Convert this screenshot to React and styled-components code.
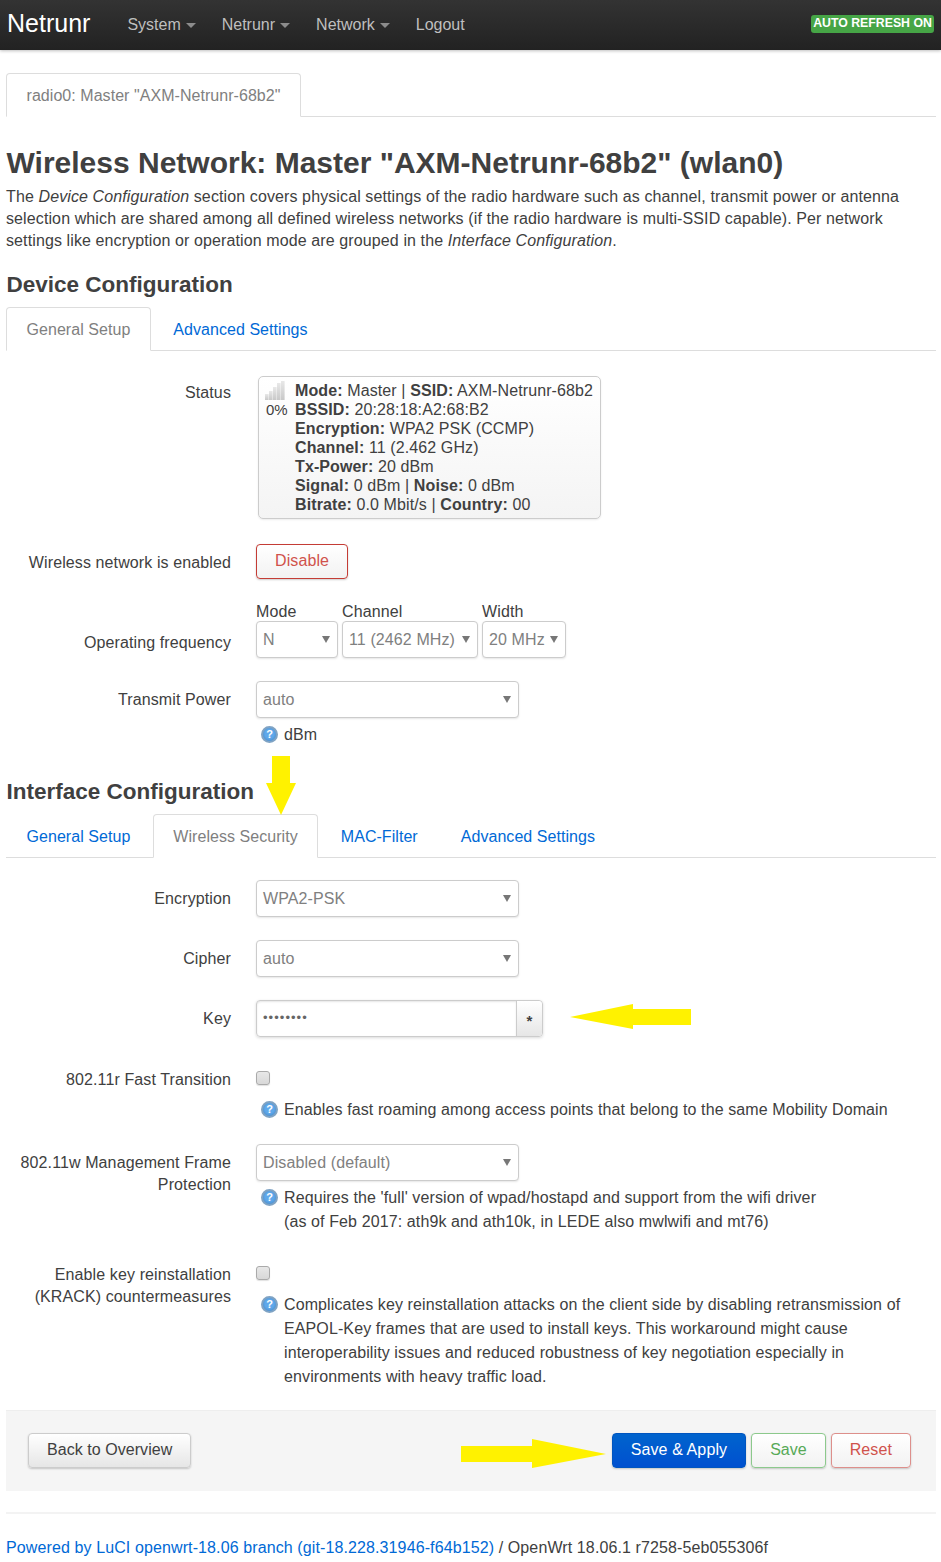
import styled, { createGlobalStyle, css } from 'styled-components'

const GlobalStyle = createGlobalStyle`
  html, body {
    margin: 0;
    padding: 0;
    background: #fff;
    color: #404040;
    font-family: "Liberation Sans", Arial, sans-serif;
    font-size: 16px;
    letter-spacing: 0.11px;
  }
  * { box-sizing: border-box; }
`

const Header = styled.header`
  height: 50px;
  display: flex;
  align-items: center;
  padding: 0 7px;
  background: linear-gradient(#333, #222);
  box-shadow: 0 1px 3px rgba(0,0,0,0.25);
`

const Brand = styled.a`
  font-size: 25px;
  letter-spacing: 0;
  color: #fff;
  margin-right: 37px;
  position: relative;
  top: -2px;
`

const NavItem = styled.a`
  display: flex;
  align-items: center;
  color: #bfbfbf;
  letter-spacing: 0;
  margin-right: 26px;
`

const NavCaret = styled.span`
  width: 0;
  height: 0;
  margin-left: 5px;
  margin-top: 1px;
  border-left: 5px solid transparent;
  border-right: 5px solid transparent;
  border-top: 5px solid #8c8c8c;
`

const RefreshBadge = styled.span`
  margin-left: auto;
  margin-top: -2px;
  height: 18px;
  width: 123px;
  background: #46a546;
  border-radius: 3px;
  color: #fff;
  font-size: 12.3px;
  font-weight: bold;
  letter-spacing: 0;
  line-height: 16px;
  text-align: center;
  white-space: nowrap;
`

const Main = styled.main`
  padding: 23px 5px 0 6px;
`

const TabBar = styled.ul`
  list-style: none;
  display: flex;
  margin: 0;
  padding: 0;
  height: 44px;
  border-bottom: 1px solid #ddd;
`

const Tab = styled.li`
  height: 44px;
  padding: 0 19.5px;
  margin-right: 2px;
  line-height: 43px;
  color: #0069d6;
  letter-spacing: 0.05px;
  border: 1px solid transparent;
  white-space: nowrap;
  ${p => p.$active && css`
    color: #808080;
    background: #fff;
    border-color: #ddd;
    border-bottom-color: #fff;
    border-radius: 4px 4px 0 0;
  `}
`

const PageTitle = styled.h2`
  font-size: 30px;
  line-height: 36px;
  font-weight: bold;
  letter-spacing: 0;
  margin: 28px 0 5px;
  padding-left: 0.5px;
  white-space: nowrap;
`

const Intro = styled.p`
  margin: 0;
  line-height: 22px;
  white-space: nowrap;
`

const SectionTitle = styled.h3`
  font-size: 22.5px;
  line-height: 34px;
  font-weight: bold;
  letter-spacing: 0;
  margin: ${p => p.$top}px 0 5px;
  padding: 1px 0 0 0.5px;
`

const Section = styled.section`
  position: relative;
`

const Rows = styled.div`
  padding-top: ${p => p.$top}px;
`

const Row = styled.div`
  position: relative;
  display: grid;
  grid-template-columns: 225px 1fr;
  column-gap: 25px;
  margin-bottom: ${p => p.$gap ?? 23}px;
`

const Label = styled.label`
  text-align: right;
  line-height: 22px;
  padding-top: ${p => p.$top ?? 8}px;
`

const StatusBox = styled.div`
  width: 343px;
  height: 143px;
  margin-left: 2px;
  padding: 4px 6px 0 6px;
  display: flex;
  border: 1px solid #ccc;
  border-radius: 5px;
  background: linear-gradient(#fff, #f4f4f4);
  box-shadow: 0 1px 2px rgba(0,0,0,0.08);
`

const SignalCol = styled.div`
  width: 30px;
  flex: none;
  line-height: 19px;
  font-size: 15px;
  letter-spacing: 0;
  padding-left: 1px;
  svg { display: block; margin-left: -1px; }
`

const StatusText = styled.div`
  line-height: 19px;
  white-space: nowrap;
`

const Btn = styled.button`
  height: 35px;
  padding: 0 18px 1px;
  font: 16px "Liberation Sans", Arial, sans-serif;
  letter-spacing: 0.05px;
  border-radius: 4px;
  border: 1px solid #ccc;
  color: #404040;
  background: linear-gradient(#fff, #e6e6e6);
  box-shadow: 0 1px 2px rgba(0,0,0,0.2);
  white-space: nowrap;
  ${p => p.$kind === 'red' && css`
    padding-bottom: 2px;
    letter-spacing: 0.11px;
    color: #d0524c;
    border-color: #c43c35;
    background: linear-gradient(#fff, #f2f2f2);
  `}
  ${p => p.$kind === 'green' && css`
    letter-spacing: 0;
    color: #57a957;
    border-color: #8cc98c;
    background: linear-gradient(#fff, #f2f2f2);
  `}
  ${p => p.$kind === 'pink' && css`
    letter-spacing: 0.11px;
    color: #d0524c;
    border-color: #dd8f8b;
    background: linear-gradient(#fff, #f2f2f2);
  `}
  ${p => p.$kind === 'blue' && css`
    letter-spacing: 0.11px;
    color: #fff;
    border-color: #0055c0;
    background: linear-gradient(#0064cd, #0050d0);
  `}
`

const Select = styled.div`
  width: ${p => p.$w ?? 263}px;
  height: 37px;
  display: flex;
  align-items: center;
  justify-content: space-between;
  padding: 0 6px;
  border: 1px solid #ccc;
  border-radius: 4px;
  color: #808080;
  background: #fff;
  box-shadow: 0 1px 2px rgba(0,0,0,0.1);
  white-space: nowrap;
`

const SelectCaret = styled.span`
  flex: none;
  width: 0;
  height: 0;
  margin-right: 1px;
  border-left: 4px solid transparent;
  border-right: 4px solid transparent;
  border-top: 7px solid #777;
`

const FreqGroup = styled.div`
  display: flex;
  gap: 4px;
`

const FreqCaption = styled.div`
  line-height: 19px;
`

const KeyGroup = styled.div`
  display: flex;
  width: 287px;
  height: 37px;
  border: 1px solid #ccc;
  border-radius: 4px;
  box-shadow: 0 1px 3px rgba(0,0,0,0.15);
`

const KeyInput = styled.div`
  flex: 1;
  padding-left: 6px;
  line-height: 33px;
  font-size: 13px;
  color: #666;
  letter-spacing: 1.05px;
  box-shadow: inset 0 1px 2px rgba(0,0,0,0.1);
  border-radius: 4px 0 0 4px;
`

const KeyToggle = styled.div`
  width: 26px;
  border-left: 1px solid #ccc;
  text-align: center;
  line-height: 40px;
  font-size: 15px;
  font-weight: bold;
  color: #404040;
  background: linear-gradient(#fff, #e6e6e6);
  border-radius: 0 4px 4px 0;
`

const Checkbox = styled.div`
  width: 14px;
  height: 14px;
  margin-top: ${p => p.$top}px;
  border: 1px solid #aaa;
  border-radius: 3px;
  background: linear-gradient(#e8e8e8, #d8d8d8);
  box-shadow: 0 1px 1px rgba(0,0,0,0.12);
`

const Help = styled.div`
  position: relative;
  margin-top: ${p => p.$top ?? 4}px;
  margin-bottom: -1px;
  padding: 1px 0 0 28px;
  line-height: 24px;
  white-space: nowrap;
`

const HelpIcon = styled.span`
  position: absolute;
  left: 5px;
  top: 4px;
  width: 17px;
  height: 17px;
  border-radius: 50%;
  background: radial-gradient(circle at 50% 45%, #5fa8ea 45%, #3d7fc0);
  border: 2px solid #7fa3c4;
  color: #fff;
  font-size: 11px;
  font-weight: bold;
  letter-spacing: 0;
  line-height: 13px;
  text-align: center;
`

const Arrow = styled.svg`
  position: absolute;
  left: ${p => p.$x}px;
  top: ${p => p.$y}px;
  fill: #fff200;
  pointer-events: none;
`

const ActionBar = styled.div`
  position: relative;
  height: 81px;
  margin-top: 22px;
  padding: 0 25px 2px 22px;
  display: flex;
  align-items: center;
  gap: 5px;
  background: #f5f5f5;
  border-top: 1px solid #eee;
`

const BackBtn = styled(Btn)`
  margin-right: auto;
`

const Rule = styled.hr`
  height: 2px;
  margin: 21px 0 0;
  border: 0;
  background: #f3f3f3;
`

const Footer = styled.footer`
  margin-top: 23px;
  line-height: 22px;
  white-space: nowrap;
`

const FooterLink = styled.a`
  color: #0069d6;
`

const SignalIcon = () => (
  <svg width="20" height="19" viewBox="0 0 20 19">
    <defs>
      <linearGradient id="bar" x1="0" y1="0" x2="0" y2="1">
        <stop offset="0" stopColor="#e8e8e8" />
        <stop offset="1" stopColor="#c8c8c8" />
      </linearGradient>
    </defs>
    <rect x="0" y="13" width="3.6" height="6" fill="url(#bar)" />
    <rect x="4" y="10" width="3.6" height="9" fill="url(#bar)" />
    <rect x="8" y="6" width="3.6" height="13" fill="url(#bar)" />
    <rect x="12" y="2" width="3.6" height="17" fill="url(#bar)" />
    <rect x="16" y="0" width="3.6" height="19" fill="url(#bar)" />
  </svg>
)

const SelectBox = ({ value, w }) => (
  <Select $w={w}>
    {value}
    <SelectCaret />
  </Select>
)

const HelpText = ({ top, children }) => (
  <Help $top={top}>
    <HelpIcon>?</HelpIcon>
    {children}
  </Help>
)

const App = () => (
  <>
    <GlobalStyle />
    <Header>
      <Brand>Netrunr</Brand>
      <NavItem>System<NavCaret /></NavItem>
      <NavItem>Netrunr<NavCaret /></NavItem>
      <NavItem>Network<NavCaret /></NavItem>
      <NavItem>Logout</NavItem>
      <RefreshBadge>AUTO REFRESH ON</RefreshBadge>
    </Header>
    <Main>
      <TabBar>
        <Tab $active>radio0: Master "AXM-Netrunr-68b2"</Tab>
      </TabBar>
      <PageTitle>Wireless Network: Master "AXM-Netrunr-68b2" (wlan0)</PageTitle>
      <Intro>
        The <em>Device Configuration</em> section covers physical settings of the radio hardware such as channel, transmit power or antenna<br />
        selection which are shared among all defined wireless networks (if the radio hardware is multi-SSID capable). Per network<br />
        settings like encryption or operation mode are grouped in the <em>Interface Configuration</em>.
      </Intro>

      <Section>
        <SectionTitle $top={15}>Device Configuration</SectionTitle>
        <TabBar>
          <Tab $active>General Setup</Tab>
          <Tab>Advanced Settings</Tab>
        </TabBar>
        <Rows $top={25}>
          <Row $gap={25}>
            <Label $top={6}>Status</Label>
            <StatusBox>
              <SignalCol>
                <SignalIcon />
                0%
              </SignalCol>
              <StatusText>
                <b>Mode:</b> Master | <b>SSID:</b> AXM-Netrunr-68b2<br />
                <b>BSSID:</b> 20:28:18:A2:68:B2<br />
                <b>Encryption:</b> WPA2 PSK (CCMP)<br />
                <b>Channel:</b> 11 (2.462 GHz)<br />
                <b>Tx-Power:</b> 20 dBm<br />
                <b>Signal:</b> 0 dBm | <b>Noise:</b> 0 dBm<br />
                <b>Bitrate:</b> 0.0 Mbit/s | <b>Country:</b> 00
              </StatusText>
            </StatusBox>
          </Row>
          <Row>
            <Label>Wireless network is enabled</Label>
            <div><Btn $kind="red">Disable</Btn></div>
          </Row>
          <Row>
            <Label $top={30}>Operating frequency</Label>
            <FreqGroup>
              <div>
                <FreqCaption>Mode</FreqCaption>
                <SelectBox value="N" w={82} />
              </div>
              <div>
                <FreqCaption>Channel</FreqCaption>
                <SelectBox value="11 (2462 MHz)" w={136} />
              </div>
              <div>
                <FreqCaption>Width</FreqCaption>
                <SelectBox value="20 MHz" w={84} />
              </div>
            </FreqGroup>
          </Row>
          <Row $gap={0}>
            <Label>Transmit Power</Label>
            <div>
              <SelectBox value="auto" />
              <HelpText>dBm</HelpText>
            </div>
          </Row>
        </Rows>
      </Section>

      <Section>
        <SectionTitle $top={28}>Interface Configuration</SectionTitle>
        <Arrow $x={260} $y={-18} width="30" height="60" viewBox="0 0 30 60">
          <polygon points="6,0 24,0 24,27 30,27 15,59 0,27 6,27" />
        </Arrow>
        <TabBar>
          <Tab>General Setup</Tab>
          <Tab $active>Wireless Security</Tab>
          <Tab>MAC-Filter</Tab>
          <Tab>Advanced Settings</Tab>
        </TabBar>
        <Rows $top={22}>
          <Row>
            <Label>Encryption</Label>
            <SelectBox value="WPA2-PSK" />
          </Row>
          <Row>
            <Label>Cipher</Label>
            <SelectBox value="auto" />
          </Row>
          <Row $gap={24}>
            <Label>Key</Label>
            <KeyGroup>
              <KeyInput>••••••••</KeyInput>
              <KeyToggle>*</KeyToggle>
            </KeyGroup>
            <Arrow $x={564} $y={4} width="122" height="26" viewBox="0 0 122 26">
              <polygon points="0,13 63,0 63,5 121,5 121,21 63,21 63,25" />
            </Arrow>
          </Row>
          <Row>
            <Label>802.11r Fast Transition</Label>
            <div>
              <Checkbox $top={10} />
              <HelpText top={12}>Enables fast roaming among access points that belong to the same Mobility Domain</HelpText>
            </div>
          </Row>
          <Row>
            <Label>802.11w Management Frame Protection</Label>
            <div>
              <SelectBox value="Disabled (default)" />
              <HelpText>
                Requires the 'full' version of wpad/hostapd and support from the wifi driver<br />
                (as of Feb 2017: ath9k and ath10k, in LEDE also mwlwifi and mt76)
              </HelpText>
            </div>
          </Row>
          <Row $gap={0}>
            <Label>Enable key reinstallation (KRACK) countermeasures</Label>
            <div>
              <Checkbox $top={10} />
              <HelpText top={12}>
                Complicates key reinstallation attacks on the client side by disabling retransmission of<br />
                EAPOL-Key frames that are used to install keys. This workaround might cause<br />
                interoperability issues and reduced robustness of key negotiation especially in<br />
                environments with heavy traffic load.
              </HelpText>
            </div>
          </Row>
        </Rows>
      </Section>

      <ActionBar>
        <BackBtn>Back to Overview</BackBtn>
        <Btn $kind="blue">Save &amp; Apply</Btn>
        <Btn $kind="green">Save</Btn>
        <Btn $kind="pink">Reset</Btn>
        <Arrow $x={455} $y={28} width="146" height="30" viewBox="0 0 146 30">
          <polygon points="0,7 71,7 71,0 145,15 71,29 71,23 0,23" />
        </Arrow>
      </ActionBar>
      <Rule />
      <Footer>
        <FooterLink>Powered by LuCI openwrt-18.06 branch (git-18.228.31946-f64b152)</FooterLink> / OpenWrt 18.06.1 r7258-5eb055306f
      </Footer>
    </Main>
  </>
)

export default App
